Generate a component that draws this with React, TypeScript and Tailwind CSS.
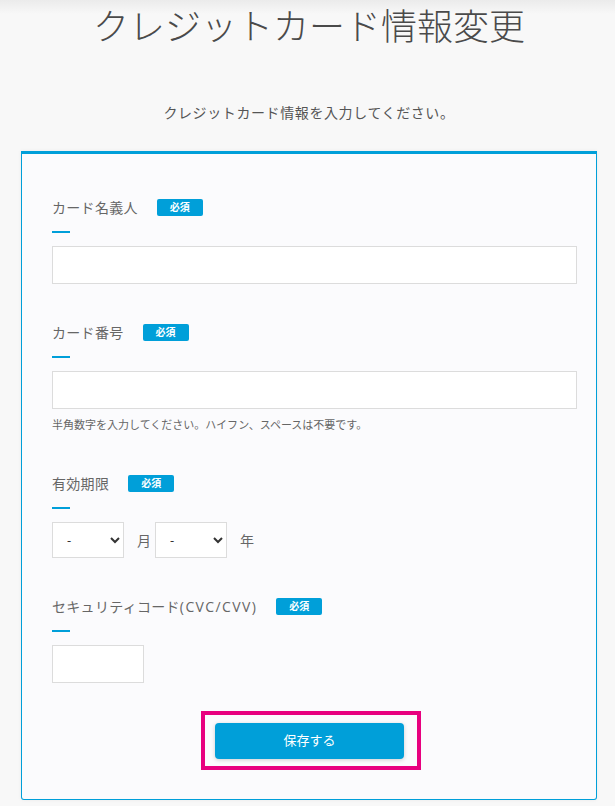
import { ChangeEvent, useState } from 'react';

const jp = { fontFamily: '"Open Sans", "Noto Sans CJK JP", "Noto Sans", sans-serif' };

function Required() {
  return (
    <span className="ml-[19px] inline-flex h-[17px] w-[46px] items-center justify-center rounded-[2px] bg-[#009fd9] text-[10px] font-bold text-white">
      必須
    </span>
  );
}

function FieldLabel({ label, note }: { label: string; note?: string }) {
  return (
    <>
      <div className="flex h-[20px] items-center">
        <span className="text-[14px] tracking-[0.3px] text-[#666]">
          {label}
          {note && <span className="tracking-[1.4px]">{note}</span>}
        </span>
        <Required />
      </div>
      <div className="mt-[14px] h-[2px] w-[18px] bg-[#009fd9]" />
    </>
  );
}

const months = ['-', ...Array.from({ length: 12 }, (_, i) => String(i + 1).padStart(2, '0'))];
const years = ['-', ...Array.from({ length: 10 }, (_, i) => String(2025 + i))];

export default function App() {
  const [holder, setHolder] = useState('');
  const [number, setNumber] = useState('');
  const [month, setMonth] = useState('-');
  const [year, setYear] = useState('-');
  const [cvc, setCvc] = useState('');

  const inputClass =
    'mt-[13px] block h-[38px] border border-[#dcdcdc] bg-white px-3 text-[14px] text-[#333] outline-none';

  return (
    <div
      className="min-h-screen bg-[linear-gradient(to_bottom,#ebebeb,#f8f8f8_14px)] pb-[5px] pl-[21px] pr-[18px]"
      style={jp}
    >
      {/* HEADER */}
      <h1 className="pt-[5px] text-center text-[36px] font-light leading-[44px] text-[#4a4a4a]">
        クレジットカード情報変更
      </h1>

      <p className="mt-[54px] text-center text-[14px] leading-[20px] tracking-[0.6px] text-[#555]">
        クレジットカード情報を入力してください。
      </p>

      {/* FORM */}
      <form
        onSubmit={(e) => e.preventDefault()}
        className="mt-[28px] rounded-b-[3px] border-x border-b border-t-[3px] border-[#009fd9] bg-[#fbfbfd] pb-[29px] pl-[30px] pr-[19px] pt-[43px] shadow-[0_0_4px_rgba(0,0,0,0.06)]"
      >
        <FieldLabel label="カード名義人" />
        <input
          value={holder}
          onChange={(e: ChangeEvent<HTMLInputElement>) => setHolder(e.target.value)}
          className={`${inputClass} w-full`}
        />

        <div className="mt-[38px]">
          <FieldLabel label="カード番号" />
          <input
            value={number}
            onChange={(e: ChangeEvent<HTMLInputElement>) => setNumber(e.target.value)}
            className={`${inputClass} w-full`}
          />
          <p className="mt-[8px] text-[11px] leading-[16px] text-[#666]">
            半角数字を入力してください。ハイフン、スペースは不要です。
          </p>
        </div>

        <div className="mt-[40px]">
          <FieldLabel label="有効期限" />
          <div className="mt-[13px] flex items-center">
            <select
              value={month}
              onChange={(e) => setMonth(e.target.value)}
              className="h-[36px] w-[72px] rounded-none border border-[#dcdcdc] bg-white pl-[10px] text-[13px] text-[#333]"
            >
              {months.map((m) => (
                <option key={m}>{m}</option>
              ))}
            </select>
            <span className="ml-[13px] mr-[4px] text-[14px] text-[#666]">月</span>
            <select
              value={year}
              onChange={(e) => setYear(e.target.value)}
              className="h-[36px] w-[72px] rounded-none border border-[#dcdcdc] bg-white pl-[10px] text-[13px] text-[#333]"
            >
              {years.map((y) => (
                <option key={y}>{y}</option>
              ))}
            </select>
            <span className="ml-[13px] text-[14px] text-[#666]">年</span>
          </div>
        </div>

        <div className="mt-[38px]">
          <FieldLabel label="セキュリティコード" note="(CVC/CVV)" />
          <input
            value={cvc}
            onChange={(e: ChangeEvent<HTMLInputElement>) => setCvc(e.target.value)}
            className={`${inputClass} w-[92px]`}
          />
        </div>

        {/* SUBMIT */}
        <div className="mt-[28px] flex justify-center pr-[7px]">
          <div className="border-[4px] border-[#e8007f] pb-[7px] pl-[10px] pr-[13px] pt-[8px]">
            <button
              type="submit"
              className="h-[36px] w-[189px] rounded-[4px] bg-[#009fd9] text-[13px] text-white shadow-[0_1px_4px_rgba(0,0,0,0.18)]"
            >
              保存する
            </button>
          </div>
        </div>
      </form>
    </div>
  );
}
